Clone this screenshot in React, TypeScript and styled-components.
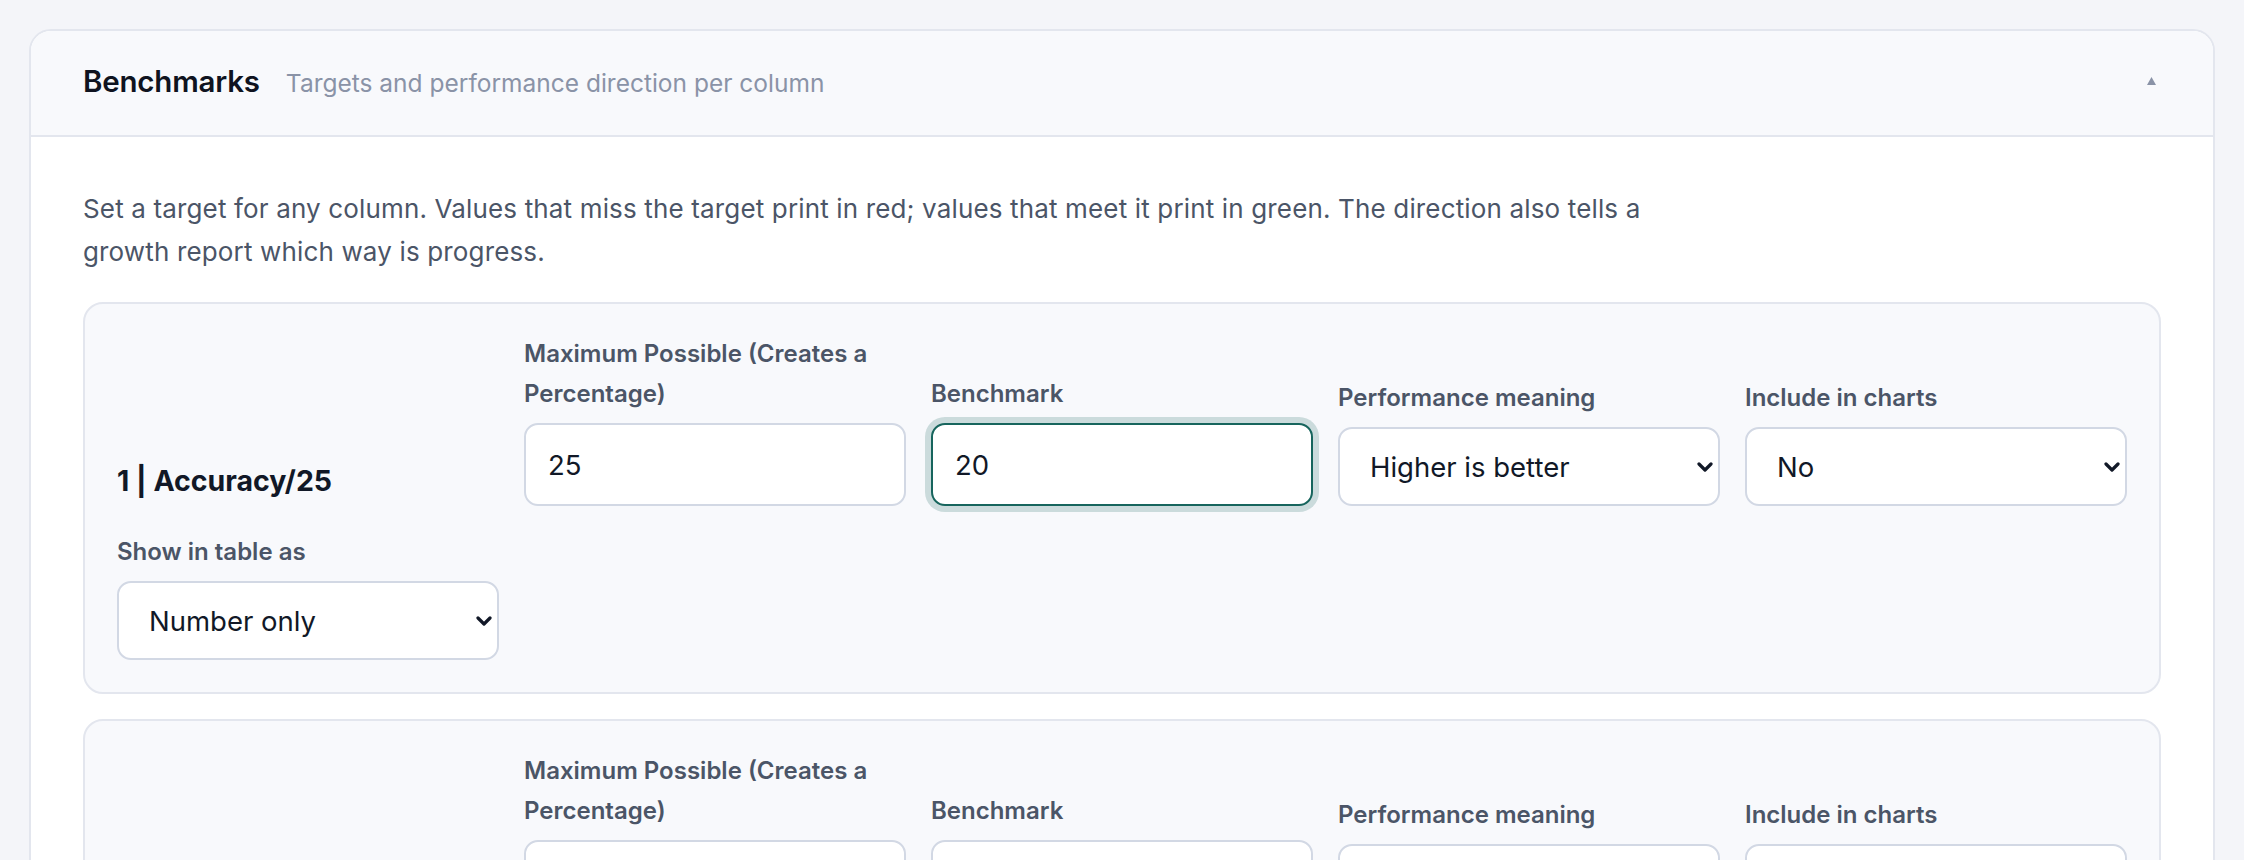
import React from "react";
import styled, { createGlobalStyle, css } from "styled-components";

const GlobalStyle = createGlobalStyle`
  * { box-sizing: border-box; }
  body {
    margin: 0;
    background: #f4f5f9;
    font-family: Inter, "Noto Sans", "Liberation Sans", sans-serif;
  }
`;

type Field = {
  label: string;
  kind: "input" | "select";
  value: string;
  focused?: boolean;
};

type Column = {
  title: string;
  fields: Field[];
  display: string;
};

const columns: Column[] = [
  {
    title: "1 | Accuracy/25",
    display: "Number only",
    fields: [
      { label: "Maximum Possible (Creates a Percentage)", kind: "input", value: "25" },
      { label: "Benchmark", kind: "input", value: "20", focused: true },
      { label: "Performance meaning", kind: "select", value: "Higher is better" },
      { label: "Include in charts", kind: "select", value: "No" },
    ],
  },
  {
    title: "2 | Technique/25",
    display: "Number only",
    fields: [
      { label: "Maximum Possible (Creates a Percentage)", kind: "input", value: "25" },
      { label: "Benchmark", kind: "input", value: "" },
      { label: "Performance meaning", kind: "select", value: "Higher is better" },
      { label: "Include in charts", kind: "select", value: "No" },
    ],
  },
];

export default function App() {
  return (
    <>
      <GlobalStyle />
      <Page>
        <Panel>
          <Header>
            <TitleGroup>
              <Title>Benchmarks</Title>
              <Subtitle>Targets and performance direction per column</Subtitle>
            </TitleGroup>
            <Caret width="9" height="8" viewBox="0 0 9 8">
              <polygon points="4.5,0 9,8 0,8" fill="currentColor" />
            </Caret>
          </Header>
          <Body>
            <Intro>
              Set a target for any column. Values that miss the target print in red; values that meet it
              print in green. The direction also tells a growth report which way is progress.
            </Intro>
            <CardList>
              {columns.map((col) => (
                <ColumnCard key={col.title}>
                  <ColumnName>{col.title}</ColumnName>
                  {col.fields.map((f) => (
                    <FieldBox key={f.label}>
                      <Label>{f.label}</Label>
                      {f.kind === "input" ? (
                        <TextInput defaultValue={f.value} $focused={f.focused} />
                      ) : (
                        <SelectControl value={f.value} />
                      )}
                    </FieldBox>
                  ))}
                  <FieldBox>
                    <Label>Show in table as</Label>
                    <SelectControl value={col.display} />
                  </FieldBox>
                </ColumnCard>
              ))}
            </CardList>
          </Body>
        </Panel>
      </Page>
    </>
  );
}

const SelectControl = ({ value }: { value: string }) => (
  <SelectWrap>
    <Select defaultValue={value}>
      <option>{value}</option>
    </Select>
    <Chevron width="16" height="11" viewBox="0 0 16 11">
      <path d="M2 2.5 L8 8.5 L14 2.5" fill="none" stroke="currentColor" strokeWidth="3.2" strokeLinecap="round" strokeLinejoin="round" />
    </Chevron>
  </SelectWrap>
);

const Page = styled.div`
  padding: 29px 29px 0;
  min-height: 100vh;
`;

const Panel = styled.section`
  background: #ffffff;
  border: 2px solid #e3e6ee;
  border-radius: 22px;
  overflow: hidden;
`;

const Header = styled.header`
  display: flex;
  align-items: center;
  justify-content: space-between;
  height: 106px;
  padding: 0 57px 5px 52px;
  background: #f8f9fc;
  border-bottom: 2px solid #e3e6ee;
`;

const TitleGroup = styled.div`
  display: flex;
  align-items: baseline;
  gap: 26px;
`;

const Title = styled.h2`
  margin: 0;
  font-size: 29.5px;
  font-weight: 600;
  color: #0f1320;
  letter-spacing: -0.2px;
`;

const Subtitle = styled.span`
  font-size: 24.5px;
  color: #8a93a7;
`;

const Caret = styled.svg`
  color: #8a93a7;
`;

const Body = styled.div`
  padding: 50px 52px;
`;

const Intro = styled.p`
  margin: 0 0 29px;
  max-width: 1600px;
  font-size: 26px;
  letter-spacing: 0.15px;
  line-height: 43px;
  color: #4b5567;
`;

const CardList = styled.div`
  display: flex;
  flex-direction: column;
  gap: 25px;
`;

const ColumnCard = styled.div`
  display: grid;
  grid-template-columns: repeat(5, 1fr);
  column-gap: 25px;
  row-gap: 26px;
  align-items: end;
  padding: 30px 32px 32px;
  background: #f8f9fc;
  border: 2px solid #e3e6ee;
  border-radius: 20px;
`;

const ColumnName = styled.div`
  margin-bottom: 5px;
  font-size: 28.5px;
  line-height: 40px;
  font-weight: 700;
  color: #111827;
`;

const FieldBox = styled.div`
  display: flex;
  flex-direction: column;
`;

const Label = styled.label`
  margin-bottom: 9px;
  font-size: 24px;
  line-height: 40px;
  font-weight: 600;
  color: #4b5567;
`;

const controlBase = css`
  width: 100%;
  font-family: inherit;
  font-size: 27.5px;
  line-height: normal;
  color: #111827;
  background: #ffffff;
  border: 2px solid #d2d8e4;
  border-radius: 14px;
  outline: none;
`;

const TextInput = styled.input<{ $focused?: boolean }>`
  ${controlBase};
  height: 83px;
  padding: 0 22px;
  ${(p) =>
    p.$focused &&
    css`
      border-color: #17655d;
      box-shadow: 0 0 0 6px rgba(23, 101, 93, 0.2);
    `}
`;

const SelectWrap = styled.div`
  position: relative;
`;

const Select = styled.select`
  ${controlBase};
  appearance: none;
  height: 79px;
  padding: 0 48px 0 30px;
`;

const Chevron = styled.svg`
  position: absolute;
  right: 7px;
  top: 50%;
  transform: translateY(-50%);
  color: #111827;
  pointer-events: none;
`;
